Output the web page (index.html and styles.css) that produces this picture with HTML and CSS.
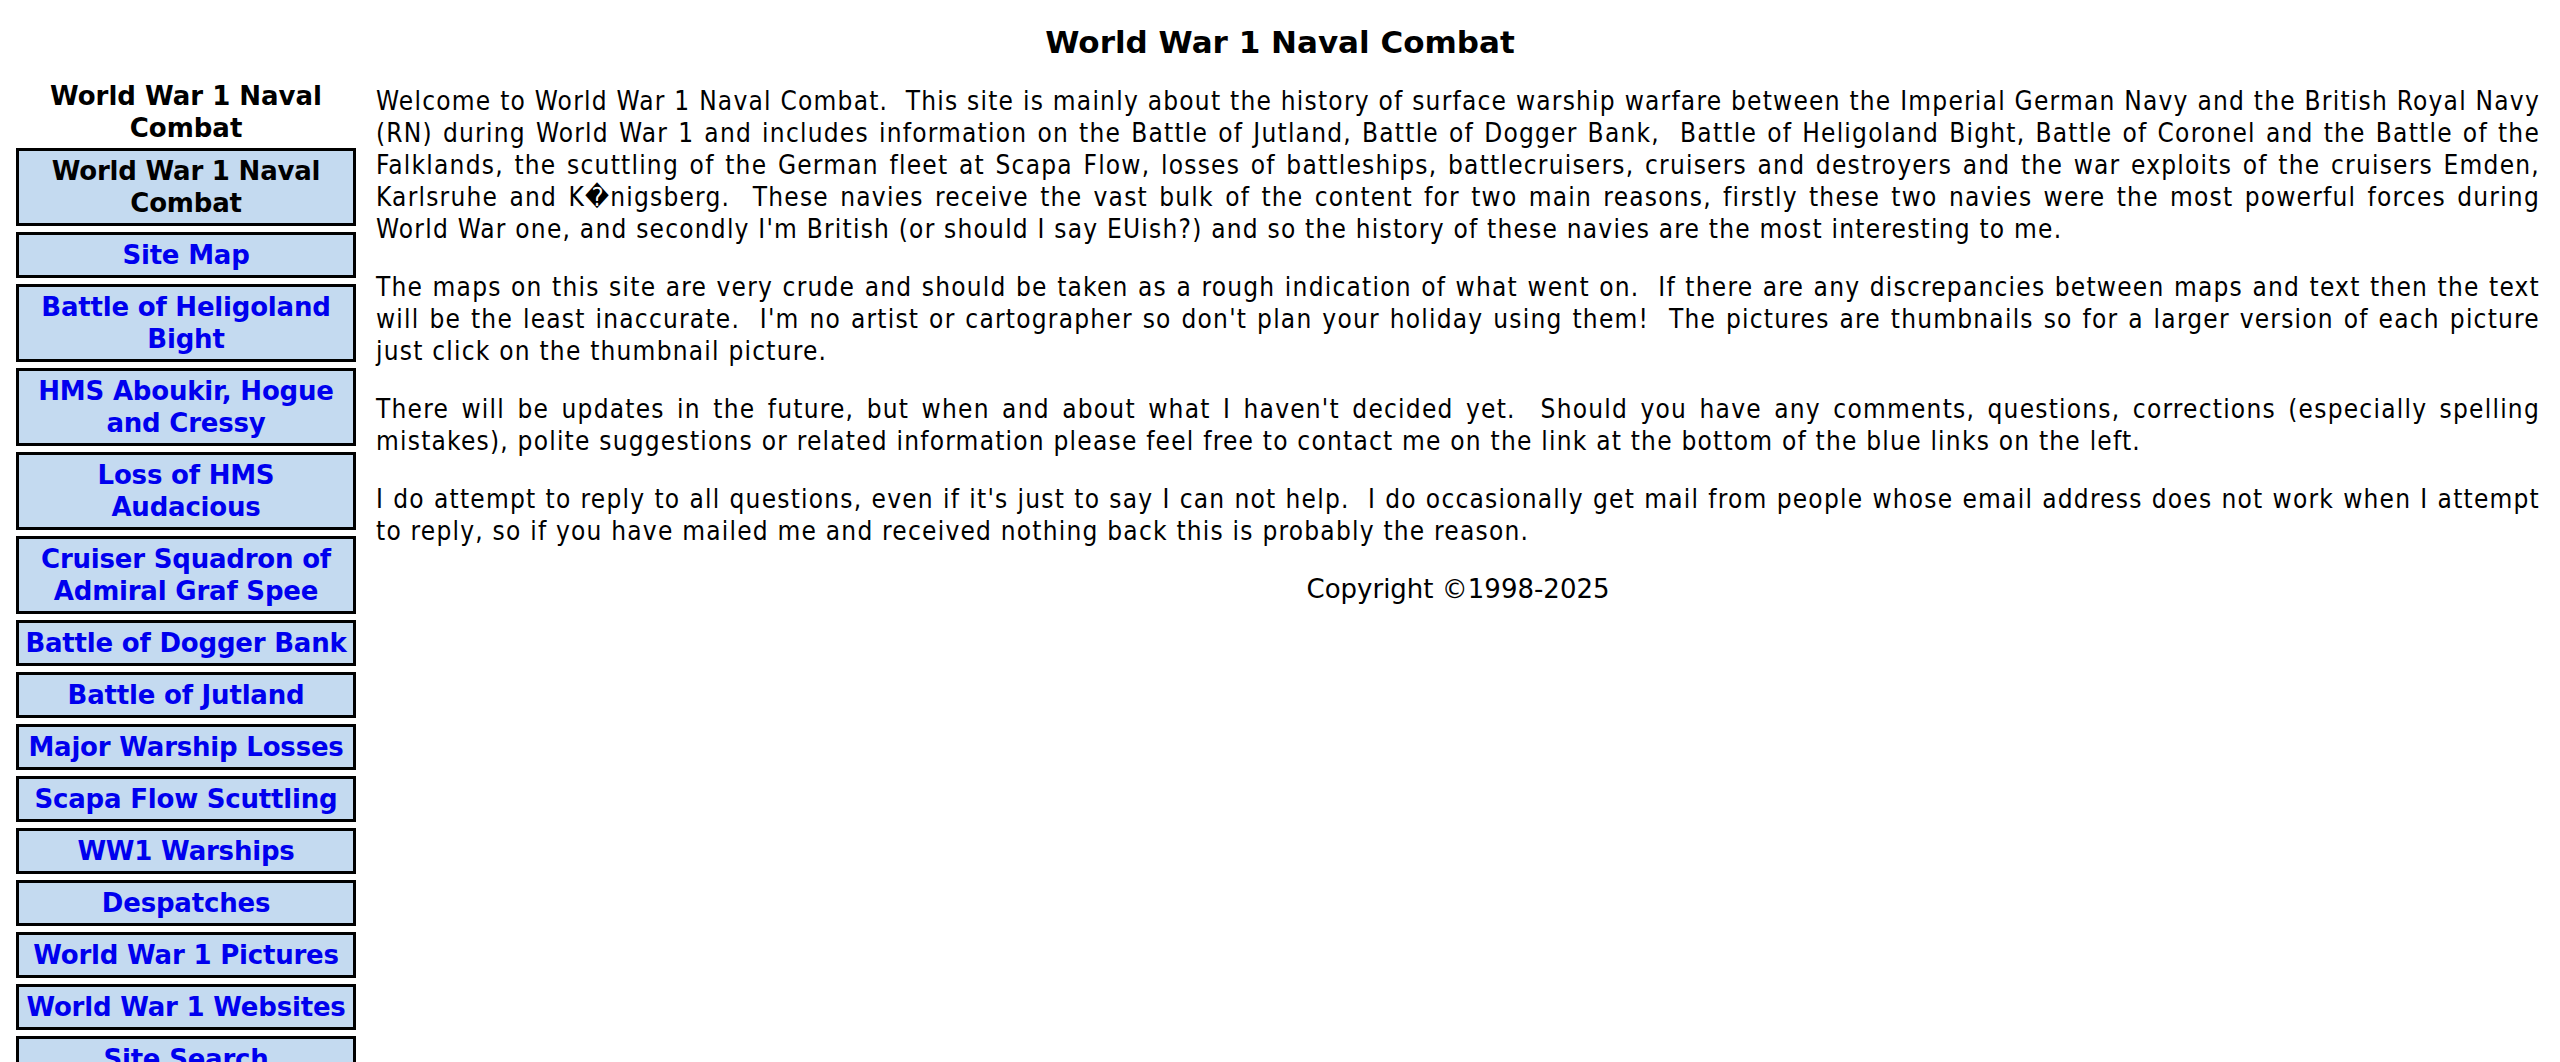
FILE: index.html
```html
<!DOCTYPE html>
<html lang="en">
<head>
<meta charset="utf-8">
<title>World War 1 Naval Combat</title>
<link rel="stylesheet" href="styles.css">
</head>
<body>
<h1 class="page-title">World War 1 Naval Combat</h1>
<div class="layout">
  <nav class="sidebar">
    <div class="side-heading">World War 1 Naval Combat</div>
    <ul class="nav-list">
      <li class="nav-item current">World War 1 Naval Combat</li>
      <li class="nav-item"><a href="#">Site Map</a></li>
      <li class="nav-item"><a href="#">Battle of Heligoland Bight</a></li>
      <li class="nav-item"><a href="#">HMS Aboukir, Hogue and Cressy</a></li>
      <li class="nav-item"><a href="#">Loss of HMS Audacious</a></li>
      <li class="nav-item"><a href="#">Cruiser Squadron of Admiral Graf Spee</a></li>
      <li class="nav-item"><a href="#">Battle of Dogger Bank</a></li>
      <li class="nav-item"><a href="#">Battle of Jutland</a></li>
      <li class="nav-item"><a href="#">Major Warship Losses</a></li>
      <li class="nav-item"><a href="#">Scapa Flow Scuttling</a></li>
      <li class="nav-item"><a href="#">WW1 Warships</a></li>
      <li class="nav-item"><a href="#">Despatches</a></li>
      <li class="nav-item"><a href="#">World War 1 Pictures</a></li>
      <li class="nav-item"><a href="#">World War 1 Websites</a></li>
      <li class="nav-item"><a href="#">Site Search</a></li>
      <li class="nav-item"><a href="#">Contact Me</a></li>
    </ul>
  </nav>
  <main class="content">
    <p class="text">Welcome to World War 1 Naval Combat.&nbsp; This site is mainly about the history of surface warship warfare between the Imperial German Navy and the British Royal Navy (RN) during World War 1 and includes information on the Battle of Jutland, Battle of Dogger Bank,&nbsp; Battle of Heligoland Bight, Battle of Coronel and the Battle of the Falklands, the scuttling of the German fleet at Scapa Flow, losses of battleships, battlecruisers, cruisers and destroyers and the war exploits of the cruisers Emden, Karlsruhe and K&#xFFFD;nigsberg.&nbsp; These navies receive the vast bulk of the content for two main reasons, firstly these two navies were the most powerful forces during World War one, and secondly I'm British (or should I say EUish?) and so the history of these navies are the most interesting to me.</p>
    <p class="text">The maps on this site are very crude and should be taken as a rough indication of what went on.&nbsp; If there are any discrepancies between maps and text then the text will be the least inaccurate.&nbsp; I'm no artist or cartographer so don't plan your holiday using them!&nbsp; The pictures are thumbnails so for a larger version of each picture just click on the thumbnail picture.</p>
    <p class="text">There will be updates in the future, but when and about what I haven't decided yet.&nbsp; Should you have any comments, questions, corrections (especially spelling mistakes), polite suggestions or related information please feel free to contact me on the link at the bottom of the blue links on the left.</p>
    <p class="text">I do attempt to reply to all questions, even if it's just to say I can not help.&nbsp; I do occasionally get mail from people whose email address does not work when I attempt to reply, so if you have mailed me and received nothing back this is probably the reason.</p>
    <p class="copyright">Copyright &copy;1998-2025</p>
  </main>
</div>
</body>
</html>
```
FILE: styles.css
```css
html, body {
  margin: 0;
  padding: 0;
  background: #ffffff;
}
body {
  font-family: "DejaVu Sans", Verdana, sans-serif;
  font-size: 26px;
  color: #000;
}
.page-title {
  margin: 23px 0 0 0;
  font-size: 31px;
  line-height: 38px;
  font-weight: bold;
  text-align: center;
}
.layout {
  display: flex;
  align-items: flex-start;
  padding: 18px 20px 0 16px;
  gap: 20px;
}
.sidebar {
  flex: 0 0 340px;
  width: 340px;
}
.side-heading {
  font-weight: bold;
  text-align: center;
  line-height: 32px;
  padding: 1px 20px 0;
}
.nav-list {
  list-style: none;
  margin: 4px 0 0 0;
  padding: 0;
  display: flex;
  flex-direction: column;
  gap: 6px;
}
.nav-item {
  background: #c4daf0;
  border: 3px solid #000;
  padding: 4px 2px;
  text-align: center;
  font-weight: bold;
  line-height: 32px;
  letter-spacing: -0.2px;
}
.nav-item a {
  color: #0000ee;
  text-decoration: none;
}
.content {
  flex: 1 1 auto;
  padding-top: 6px;
}
.text {
  font-family: "DejaVu Sans Condensed", "DejaVu Sans", sans-serif;
  font-stretch: condensed;
  letter-spacing: 1.22px;
  text-align: justify;
  line-height: 32px;
  margin: 0 0 26px 0;
}
.copyright {
  text-align: center;
  line-height: 32px;
  margin: 0;
}
```
